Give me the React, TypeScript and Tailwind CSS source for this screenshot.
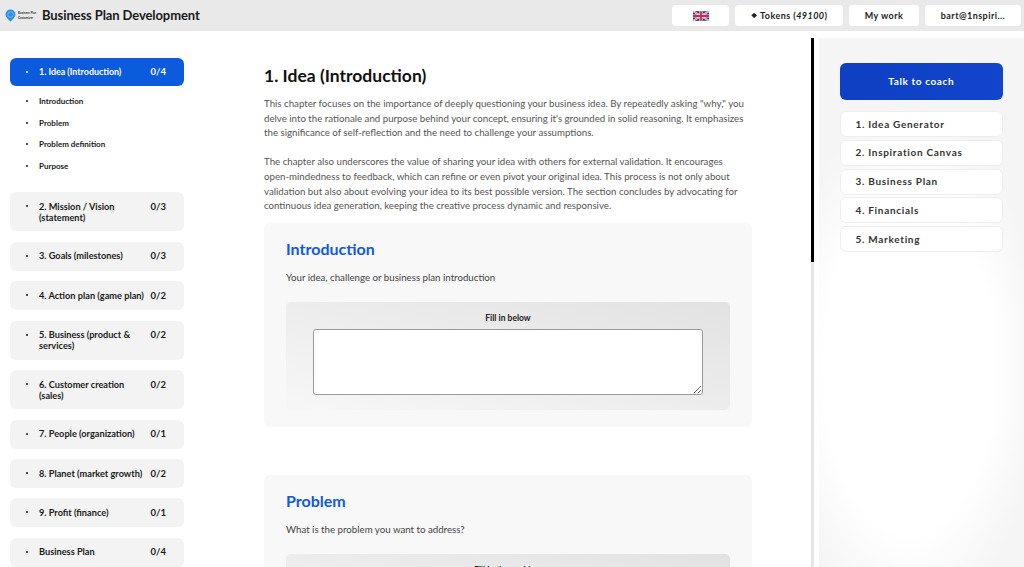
const font = { fontFamily: "Lato, 'Noto Sans', sans-serif" };

const chapters = [
  { title: "2. Mission / Vision (statement)", count: "0/3", tall: true },
  { title: "3. Goals (milestones)", count: "0/3" },
  { title: "4. Action plan (game plan)", count: "0/2" },
  { title: "5. Business (product & services)", count: "0/2", tall: true },
  { title: "6. Customer creation (sales)", count: "0/2", tall: true },
  { title: "7. People (organization)", count: "0/1" },
  { title: "8. Planet (market growth)", count: "0/2" },
  { title: "9. Profit (finance)", count: "0/1" },
  { title: "Business Plan", count: "0/4" },
];

const subItems = ["Introduction", "Problem", "Problem definition", "Purpose"];
const tools = ["1. Idea Generator", "2. Inspiration Canvas", "3. Business Plan", "4. Financials", "5. Marketing"];

const FlagUK = () => (
  <svg width="16" height="10" viewBox="0 0 60 36" className="rounded-[2px]">
    <rect width="60" height="36" fill="#27337f" />
    <path d="M0 0L60 36M60 0L0 36" stroke="#fff" strokeWidth="7" />
    <path d="M0 0L60 36M60 0L0 36" stroke="#d0283c" strokeWidth="2.5" />
    <path d="M30 0V36M0 18H60" stroke="#fff" strokeWidth="12" />
    <path d="M30 0V36M0 18H60" stroke="#d0283c" strokeWidth="7" />
  </svg>
);

const Logo = () => (
  <div className="flex items-center gap-[2px]">
    <svg width="11" height="13" viewBox="0 0 22 26">
      <path d="M11 25C6 20 1 16 1 11a10 10 0 0 1 20 0c0 5-5 9-10 14z" fill="#2b8fe6" />
      <circle cx="11" cy="11" r="5.5" fill="none" stroke="#8cc6f5" strokeWidth="1.5" />
    </svg>
    <div className="flex w-[17px] flex-col whitespace-nowrap text-[3px] leading-[5px] font-bold text-[#333]">
      <span>Business Plan</span>
      <span>Customizer</span>
    </div>
  </div>
);

const Dot = () => <span className="mr-[11px] mt-[4.5px] size-[2px] shrink-0 rounded-full bg-current" />;

const HeaderButton = ({ width, children }: { width: string; children: React.ReactNode }) => (
  <div className={`${width} flex h-[21px] items-center justify-center rounded-[4px] bg-white text-[9px] font-bold tracking-[0.45px] text-[#222]`}>
    {children}
  </div>
);

const Section = ({ title, text, label }: { title: string; text: string; label: string }) => (
  <div className="h-[204px] shrink-0 rounded-[6px] bg-[#f8f8f8] px-[22px] pt-[16px]">
    <h2 className="text-[16px] leading-[20px] font-bold text-[#1059e0]">{title}</h2>
    <p className="mt-[11px] text-[9.7px] leading-[14px] text-[#444]">{text}</p>
    <div className="mt-[18px] h-[108px] rounded-[5px] bg-gradient-to-bl from-[#e2e2e2] to-[#f7f7f7] px-[27px] pt-[10px]">
      <div className="text-center text-[8.5px] leading-[12px] font-bold text-[#222]">{label}</div>
      <textarea className="mt-[5px] block h-[66px] w-[390px] rounded-[3px] border border-[#999] bg-white" />
    </div>
  </div>
);

export default function App() {
  return (
    <div style={font} className="flex h-screen w-full flex-col overflow-hidden bg-white">
      <header className="flex h-[31px] shrink-0 items-center bg-[#e9e9e9] pl-[5px] pr-[3px]">
        <Logo />
        <h1 className="ml-[7px] text-[13px] font-bold tracking-[-0.1px] text-[#1a1a1a]">Business Plan Development</h1>
        <div className="ml-auto flex gap-[6px]">
          <HeaderButton width="w-[57px]"><FlagUK /></HeaderButton>
          <HeaderButton width="w-[108px]">
            <span className="mr-[3px] text-[7px]">❖</span>Tokens (<em>49100</em>)
          </HeaderButton>
          <HeaderButton width="w-[70px]">My work</HeaderButton>
          <HeaderButton width="w-[96px]">bart@1nspiri...</HeaderButton>
        </div>
      </header>

      <div className="flex min-h-0 flex-1">
        <aside className="w-[254px] shrink-0 pl-[10px] pt-[27px]">
          <div className="w-[174px]">
            <div className="flex h-[28px] items-center rounded-[6px] bg-[#0d5bdd] pl-[16px] pr-[18px] text-[8.9px] font-bold text-white">
              <span className="mr-[11px] size-[2px] shrink-0 rounded-full bg-current" />
              <span className="flex-1">1. Idea (Introduction)</span>
              <span className="text-[9.5px]">0/4</span>
            </div>
            <ul className="mb-[15.5px] mt-[4.5px] pl-[16px]">
              {subItems.map((item) => (
                <li key={item} className="flex h-[21.6px] items-center text-[8px] font-bold text-[#1a1a1a]">
                  <span className="mr-[11px] size-[2px] shrink-0 rounded-full bg-current" />
                  {item}
                </li>
              ))}
            </ul>
            <div className="flex flex-col gap-[10.4px]">
              {chapters.map((c) => (
                <div
                  key={c.title}
                  className={`flex ${c.tall ? "h-[39.1px]" : "h-[29px]"} items-start rounded-[6px] bg-[#f3f3f3] pl-[16px] pr-[18px] pt-[8.5px] text-[9.2px] leading-[11px] font-bold text-[#1a1a1a]`}
                >
                  <Dot />
                  <span className="w-[108px] shrink-0">{c.title}</span>
                  <span className="ml-auto text-[9.5px]">{c.count}</span>
                </div>
              ))}
            </div>
          </div>
        </aside>

        <main className="flex w-[557px] shrink-0 flex-col pl-[10px] pr-[59px] pt-[33px]">
          <h1 className="text-[17.5px] leading-[24px] font-bold text-[#111]">1. Idea (Introduction)</h1>
          <p className="mt-[8px] whitespace-nowrap text-[9.7px] leading-[14.6px] text-[#555]">
            This chapter focuses on the importance of deeply questioning your business idea. By repeatedly asking "why," you<br />
            delve into the rationale and purpose behind your concept, ensuring it's grounded in solid reasoning. It emphasizes<br />
            the significance of self-reflection and the need to challenge your assumptions.
          </p>
          <p className="mt-[14.6px] whitespace-nowrap text-[9.7px] leading-[14.6px] text-[#555]">
            The chapter also underscores the value of sharing your idea with others for external validation. It encourages<br />
            open-mindedness to feedback, which can refine or even pivot your original idea. This process is not only about<br />
            validation but also about evolving your idea to its best possible version. The section concludes by advocating for<br />
            continuous idea generation, keeping the creative process dynamic and responsive.
          </p>
          <div className="mt-[10px] flex flex-col gap-[48px]">
            <Section title="Introduction" text="Your idea, challenge or business plan introduction" label="Fill in below" />
            <Section title="Problem" text="What is the problem you want to address?" label="Fill in the problem" />
          </div>
        </main>

        <div className="mt-[7px] w-[2.5px] shrink-0 bg-[#e6e6e6]">
          <div className="h-[224px] bg-black" />
        </div>

        <section className="ml-[5px] mt-[7px] flex-1 bg-[radial-gradient(ellipse_130px_260px_at_44%_62%,#ffffff_65%,#f5f5f5_100%)] pl-[21px] pr-[21px] pt-[25px]">
          <button className="h-[37px] w-full rounded-[6px] bg-gradient-to-r from-[#0f3fc2] to-[#1145cc] text-[10px] font-bold tracking-[0.6px] text-white">
            Talk to coach
          </button>
          <div className="mt-[11px] flex flex-col gap-[2.8px]">
            {tools.map((t) => (
              <div key={t} className="flex h-[26px] items-center rounded-[6px] border border-[#eeeeee] bg-white pl-[15px] text-[10px] font-bold tracking-[0.7px] text-[#333]">
                {t}
              </div>
            ))}
          </div>
        </section>
      </div>
    </div>
  );
}
